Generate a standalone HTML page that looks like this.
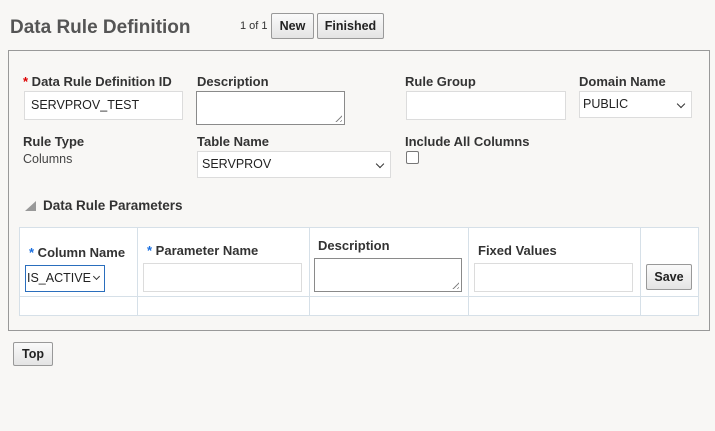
<!DOCTYPE html>
<html><head><style>
body{margin:0;width:715px;height:431px;background:#f8f7f5;font-family:"Liberation Sans",sans-serif;position:relative;overflow:hidden;color:#222}
.a{position:absolute}
.l{position:absolute;font-size:13px;font-weight:bold;color:#333}
.in{position:absolute;background:#fff;border:1px solid #dcdcdc;box-sizing:border-box;font-size:12.5px;padding-left:6px;line-height:26px}
.ta{position:absolute;background:#fff;border:1px solid #8a8a8a;box-sizing:border-box}
.ta:after{content:"";position:absolute;right:2px;bottom:2px;width:9px;height:9px;background:repeating-linear-gradient(135deg,transparent 0 2px,#888 2px 3px);clip-path:polygon(100% 0,100% 100%,0 100%)}
.btn{position:absolute;border:1px solid #999;border-radius:2px;background:linear-gradient(#fafafa,#e4e4e4);box-sizing:border-box;font-size:12.5px;font-weight:bold;text-align:center;color:#222}
.chev{position:absolute;right:7px;top:9px;width:5px;height:5px;border-right:1.5px solid #333;border-bottom:1.5px solid #333;transform:rotate(45deg)}
.st{color:#d00}.sb{color:#1a6fe0}
.v{position:absolute;top:0;bottom:0;width:1px;background:#d6e0e8}
</style></head><body>
<div class="a" style="left:10px;top:17px;font-size:19px;font-weight:bold;color:#555">Data Rule Definition</div>
<div class="a" style="left:240px;top:20px;font-size:11px;color:#333">1 of 1</div>
<div class="btn" style="left:271px;top:13px;width:43px;height:26px;line-height:24px">New</div>
<div class="btn" style="left:317px;top:13px;width:67px;height:26px;line-height:24px">Finished</div>
<div class="a" style="left:8px;top:50px;width:702px;height:281px;border:1px solid #999;box-sizing:border-box"></div>

<div class="l" style="left:23px;top:74px"><span class="st">*</span> Data Rule Definition ID</div>
<div class="in" style="left:24px;top:91px;width:159px;height:29px;line-height:27px">SERVPROV_TEST</div>
<div class="l" style="left:197px;top:74px">Description</div>
<div class="ta" style="left:196px;top:91px;width:149px;height:34px"></div>
<div class="l" style="left:405px;top:74px">Rule Group</div>
<div class="in" style="left:406px;top:91px;width:160px;height:29px"></div>
<div class="l" style="left:579px;top:74px">Domain Name</div>
<div class="in" style="left:579px;top:91px;width:113px;height:27px;line-height:25px;padding-left:3px">PUBLIC<span class="chev"></span></div>

<div class="l" style="left:23px;top:134px">Rule Type</div>
<div class="a" style="left:23px;top:152px;font-size:12.5px;color:#444">Columns</div>
<div class="l" style="left:197px;top:134px">Table Name</div>
<div class="in" style="left:197px;top:151px;width:194px;height:27px;line-height:25px;padding-left:4px">SERVPROV<span class="chev"></span></div>
<div class="l" style="left:405px;top:134px">Include All Columns</div>
<div class="a" style="left:406px;top:151px;width:13px;height:13px;border:1px solid #777;border-radius:2px;background:#fff;box-sizing:border-box"></div>

<div class="a" style="left:25px;top:201px;width:0;height:0;border-left:11px solid transparent;border-bottom:10px solid #999"></div>
<div class="l" style="left:43px;top:198px;font-size:13.5px">Data Rule Parameters</div>

<div class="a" style="left:19px;top:227px;width:680px;height:89px;background:#fff;border:1px solid #d6e0e8;box-sizing:border-box">
<div class="v" style="left:117px"></div><div class="v" style="left:289px"></div><div class="v" style="left:448px"></div><div class="v" style="left:620px"></div>
<div class="a" style="left:0;right:0;top:68px;height:1px;background:#d6e0e8"></div>
</div>
<div class="l" style="left:29px;top:245px"><span class="sb">*</span> Column Name</div>
<div class="in" style="left:25px;top:265px;width:80px;height:27px;border:1px solid #2a6ebd;line-height:25px;padding-left:1px">IS_ACTIVE<span class="chev" style="right:5px;top:8px;width:4px;height:4px"></span></div>
<div class="l" style="left:147px;top:243px"><span class="sb">*</span> Parameter Name</div>
<div class="in" style="left:143px;top:263px;width:159px;height:29px"></div>
<div class="l" style="left:318px;top:238px">Description</div>
<div class="ta" style="left:314px;top:258px;width:148px;height:34px"></div>
<div class="l" style="left:478px;top:243px">Fixed Values</div>
<div class="in" style="left:474px;top:263px;width:159px;height:29px"></div>
<div class="btn" style="left:646px;top:264px;width:46px;height:26px;line-height:24px">Save</div>

<div class="btn" style="left:13px;top:342px;width:40px;height:24px;line-height:22px">Top</div>
</body></html>
